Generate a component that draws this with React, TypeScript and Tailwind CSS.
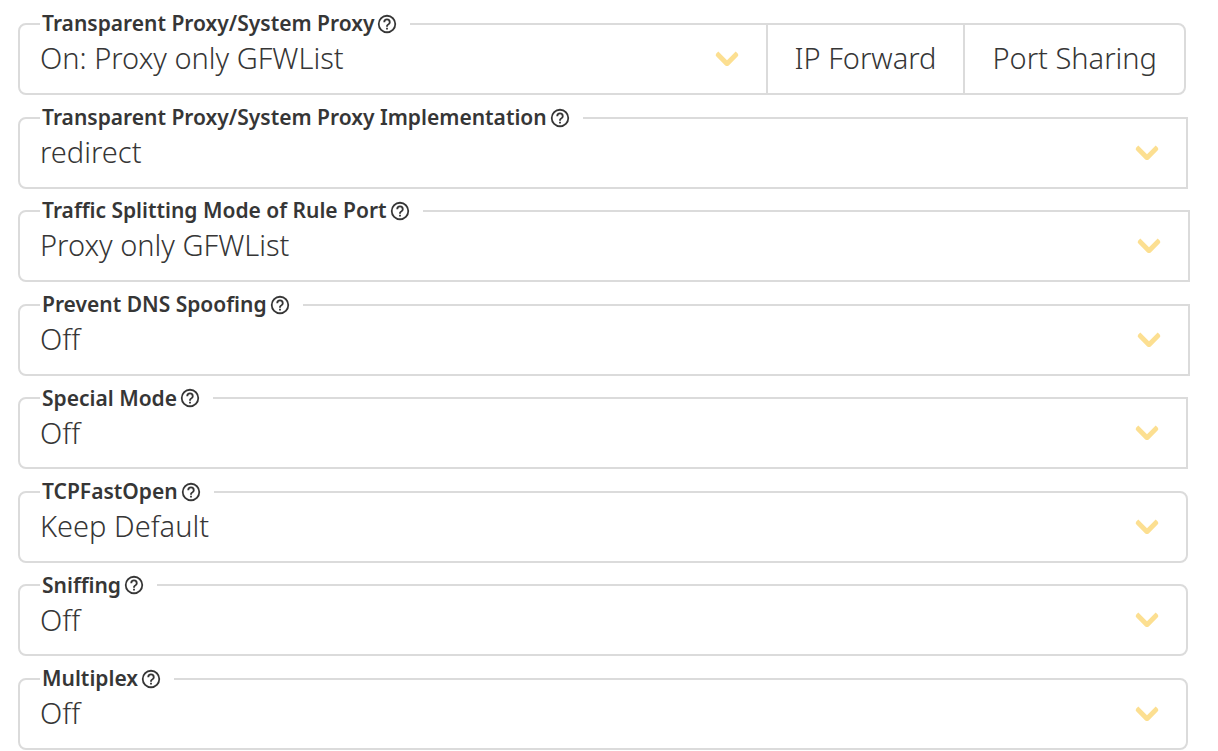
import React, { useId } from "react";

type Corner = "round" | "square";

interface Setting {
  label: string;
  options: string[];
  corner: Corner;
  margin: string;
}

const settings: Setting[] = [
  { label: "Transparent Proxy/System Proxy Implementation", options: ["redirect", "tproxy", "system proxy"], corner: "square", margin: "mr-[30px]" },
  { label: "Traffic Splitting Mode of Rule Port", options: ["Proxy only GFWList", "Proxy except CN Sites"], corner: "square", margin: "mr-7" },
  { label: "Prevent DNS Spoofing", options: ["Off", "Forward DNS Request"], corner: "square", margin: "mr-7" },
  { label: "Special Mode", options: ["Off", "supervisor"], corner: "square", margin: "mr-[30px]" },
  { label: "TCPFastOpen", options: ["Keep Default", "On", "Off"], corner: "round", margin: "mr-[30px]" },
  { label: "Sniffing", options: ["Off", "Http + TLS"], corner: "round", margin: "mr-[30px]" },
  { label: "Multiplex", options: ["Off", "On"], corner: "round", margin: "mr-[30px]" },
];

function HelpIcon() {
  return (
    <svg viewBox="0 0 24 24" className="size-[22px] shrink-0" fill="currentColor" aria-hidden="true">
      <path d="M11,18H13V16H11V18M12,2A10,10 0 0,0 2,12A10,10 0 0,0 12,22A10,10 0 0,0 22,12A10,10 0 0,0 12,2M12,20C7.59,20 4,16.41 4,12C4,7.59 7.59,4 12,4C16.41,4 20,7.59 20,12C20,16.41 16.41,20 12,20M12,6A4,4 0 0,0 8,10H10A2,2 0 0,1 12,8A2,2 0 0,1 14,10C14,12 11,11.75 11,15H13C13,12.75 16,12.5 16,10A4,4 0 0,0 12,6Z" />
    </svg>
  );
}

function Chevron() {
  return (
    <svg viewBox="0 0 24 16" className="pointer-events-none absolute right-[27px] top-[26px] h-4 w-6" fill="#fcdf91" aria-hidden="true">
      <path d="M3.3 0.6 12 9.3 20.7 0.6 22.9 2.8Q24 4.2 22.6 5.6L14 14.2Q12 16 10 14.2L1.4 5.6Q0 4.2 1.1 2.8Z" />
    </svg>
  );
}

function SelectField({ label, options, shape }: { label: string; options: string[]; shape: string }) {
  const id = useId();
  return (
    <div className={`relative min-w-0 flex-1 border-2 border-[#dbdbdb] ${shape}`}>
      <label
        htmlFor={id}
        className="absolute -top-4 left-5 z-10 flex h-7 items-center gap-0.5 bg-white pt-0.5 pl-0.5 pr-3 text-[21px] font-semibold whitespace-nowrap"
      >
        {label}
        <HelpIcon />
      </label>
      <select
        id={id}
        className="h-[68px] w-full appearance-none bg-transparent pr-14 pb-0.5 pl-5 text-[29px] font-light outline-none"
      >
        {options.map((option) => (
          <option key={option}>{option}</option>
        ))}
      </select>
      <Chevron />
    </div>
  );
}

export default function App() {
  return (
    <main className="flex min-h-screen flex-col justify-between gap-5 bg-white pt-[23px] pb-px pl-[18px] font-['Noto_Sans',sans-serif] text-[#363636]">
      <div className="mr-8 flex">
        <SelectField
          label="Transparent Proxy/System Proxy"
          options={["On: Proxy only GFWList", "Off"]}
          shape="rounded-l-lg"
        />
        <button type="button" className="-ml-0.5 border-2 border-[#dbdbdb] px-[27px] pb-0.5 text-[29px] font-light whitespace-nowrap">
          IP Forward
        </button>
        <button type="button" className="-ml-0.5 rounded-r-lg border-2 border-[#dbdbdb] px-[27px] pb-0.5 text-[29px] font-light whitespace-nowrap">
          Port Sharing
        </button>
      </div>
      {settings.map(({ label, options, corner, margin }) => (
        <div key={label} className={`flex ${margin}`}>
          <SelectField label={label} options={options} shape={corner === "round" ? "rounded-lg" : "rounded-l-lg"} />
        </div>
      ))}
    </main>
  );
}
